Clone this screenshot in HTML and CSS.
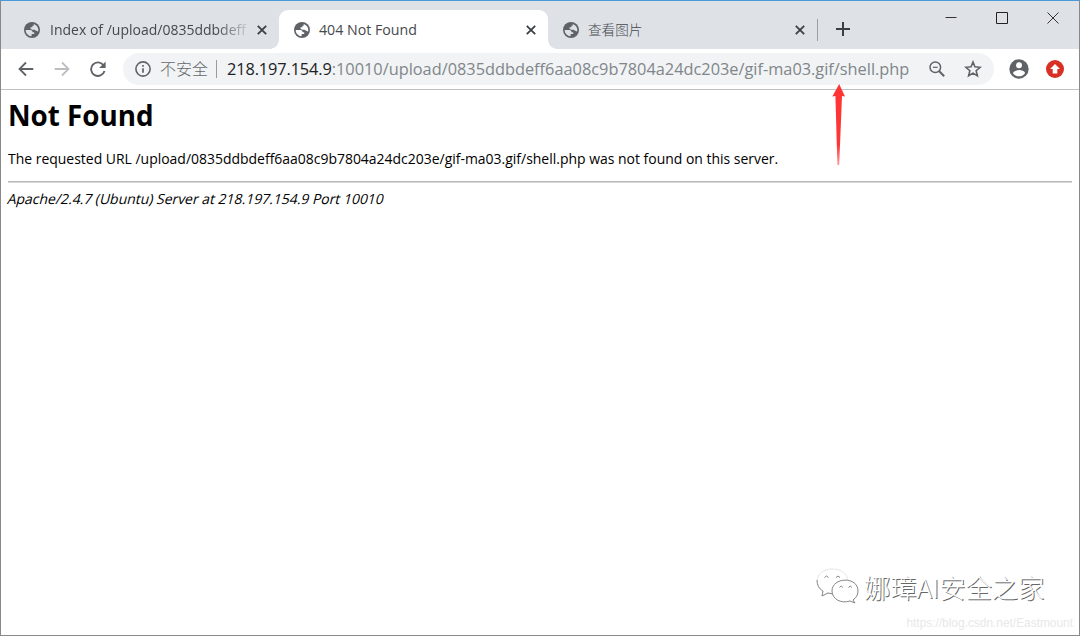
FILE: index.html
```
<!DOCTYPE html>
<html lang="zh-CN">
<head>
<meta charset="utf-8">
<title>404 Not Found</title>
<link rel="stylesheet" href="styles.css">
</head>
<body>
<svg class="defs" width="0" height="0">
  <symbol id="globe" viewBox="0 0 16 16">
    <circle cx="8" cy="8" r="8" fill="#5f6368"/>
    <path d="M1.700 8H6.200C8 8 8.600 9 8.600 10.300H10.200V12H7.600V14.200C4.300 14.100 1.700 11.400 1.700 8Z" fill="currentColor"/>
    <path d="M9.700 1.900C12.400 2.700 14.300 5.100 14.300 8C14.300 8.700 14.200 9.300 14 9.800C13.300 9.100 12.700 8.700 11.600 8.500L10.500 7.700H8L6.500 6.600V5.300H8.400V3.800H9.700Z" fill="currentColor"/>
  </symbol>
  <symbol id="close" viewBox="0 0 10 10"><path d="M.8.8l8.400 8.400M9.200.8L.8 9.200" fill="none" stroke="#3c4043" stroke-width="1.800"/></symbol>
</svg>
<div class="window">
  <header class="tabs">
    <div class="tab first"><svg class="globe"><use href="#globe"/></svg><span class="title faded">Index of /upload/0835ddbdeff</span><svg class="close"><use href="#close"/></svg></div>
    <div class="tab active"><svg class="globe"><use href="#globe"/></svg><span class="title">404 Not Found</span><svg class="close"><use href="#close"/></svg></div>
    <div class="tab"><svg class="globe"><use href="#globe"/></svg><span class="title cjk">查看图片</span><svg class="close"><use href="#close"/></svg></div>
    <span class="divider"></span>
    <svg class="plus" width="14" height="14" viewBox="0 0 14 14"><path d="M7 0v14M0 7h14" stroke="#3c4043" stroke-width="2"/></svg>
    <div class="controls">
      <svg width="12" height="12" viewBox="0 0 12 12"><path d="M.5 5.500h11" stroke="#333"/></svg>
      <svg width="12" height="12" viewBox="0 0 12 12"><path d="M.5.5h11v11H.5z" fill="none" stroke="#222"/></svg>
      <svg width="12" height="12" viewBox="0 0 12 12"><path d="M.5.5l11 11M11.500.5l-11 11" stroke="#333"/></svg>
    </div>
  </header>
  <nav class="toolbar">
    <svg class="nav" viewBox="0 0 16 16"><path d="M15.300 8H2M8 1.500L1.500 8 8 14.500" fill="none" stroke="#5f6368" stroke-width="1.800"/></svg>
    <svg class="nav" viewBox="0 0 16 16"><path d="M.7 8H14M8 1.500L14.500 8 8 14.500" fill="none" stroke="#bcbec1" stroke-width="1.800"/></svg>
    <svg class="nav" viewBox="0 0 16 16"><path d="M13.500 4.200A6.800 6.800 0 1 0 14.500 10" fill="none" stroke="#5f6368" stroke-width="1.900"/><path d="M15.600.5V7H9.100z" fill="#5f6368"/></svg>
    <div class="address">
      <svg class="info" viewBox="0 0 16 16"><circle cx="8" cy="8" r="7.100" fill="none" stroke="#5f6368" stroke-width="1.600"/><path d="M8 7.200v4.600M8 4v1.800" stroke="#5f6368" stroke-width="1.700"/></svg>
      <span class="unsafe">不安全</span>
      <span class="bar"></span>
      <span class="url"><b>218.197.154.9</b>:10010/upload/0835ddbdeff6aa08c9b7804a24dc203e/gif-ma03.gif/shell.php</span>
      <svg class="zoom" viewBox="0 0 16 16"><circle cx="6.300" cy="6.300" r="5.300" fill="none" stroke="#5f6368" stroke-width="1.500"/><path d="M10 10l5.200 5.200" stroke="#5f6368" stroke-width="2"/><path d="M3.900 6.300h4.800" stroke="#5f6368" stroke-width="1.200"/></svg>
      <svg class="star" viewBox="0 0 16 16"><path d="M8 1.800l1.700 4.300 4.600.4-3.500 3 1.100 4.500L8 11.600l-3.900 2.400 1.100-4.500-3.500-3 4.600-.4z" fill="none" stroke="#5f6368" stroke-width="1.400"/></svg>
    </div>
    <svg class="person" viewBox="0 0 20 20"><circle cx="10" cy="10" r="9.700" fill="#5f6368"/><circle cx="10" cy="6.300" r="3" fill="#fff"/><path d="M4 14.200c0-2 4-3.100 6-3.100s6 1.100 6 3.100c-1.300 1.900-3.500 3.100-6 3.100s-4.700-1.200-6-3.100z" fill="#fff"/></svg>
    <svg class="update" viewBox="0 0 18 18"><circle cx="9" cy="9" r="9" fill="#d93025"/><path d="M9 4l5 5h-2.700v4.500H6.700V9H4z" fill="#fff"/></svg>
  </nav>
  <main>
    <h1>Not Found</h1>
    <p>The requested URL /upload/0835ddbdeff6aa08c9b7804a24dc203e/gif-ma03.gif/shell.php was not found on this server.</p>
    <hr>
    <address>Apache/2.4.7 (Ubuntu) Server at 218.197.154.9 Port 10010</address>
  </main>
  <svg class="arrow" width="14" height="82" viewBox="0 0 14 82">
    <defs><linearGradient id="fade" x1="0" y1="0" x2="0" y2="1"><stop offset=".75" stop-color="#ff3535"/><stop offset="1" stop-color="#ff3535" stop-opacity=".5"/></linearGradient></defs>
    <path d="M7.200 0L13 12.500 10 12 7.200 81H5.400L3.400 12 .3 12.500z" fill="url(#fade)"/>
  </svg>
  <div class="watermark">
    <svg width="44" height="38" viewBox="0 0 44 38">
      <g fill="#fff" stroke-width="1">
        <path d="M6 28l1-5C-4 14 2 1 16 1s20 11 12 19-14 5-17 5z" stroke="#e6e6e6"/>
        <path d="M1 12c0 5 2 9 6 11l-1 5 6-3 5 1" fill="none" stroke="#8c8c8c"/>
        <path d="M39 35l-5-2c-9 3-18-2-18-10 0-14 26-15 26 0 0 4-2 7-5 9z" stroke="#858585"/>
        <path d="M8.500 9.500q2-3 4 0M20 9.500q2-3 4 0M23.500 19.500q1.700-3 3.400 0M32.500 19.500q1.700-3 3.400 0" fill="none" stroke="#858585"/>
      </g>
    </svg>
    <span>娜璋AI安全之家</span>
  </div>
  <div class="source">https://blog.csdn.net/Eastmount</div>
</div>
</body>
</html>
```
FILE: styles.css
```
* { box-sizing: border-box; }
body { margin: 0; background: #fff; font-family: "Open Sans", "Noto Sans CJK SC", sans-serif; }
.defs { position: absolute; }
.window { position: relative; width: 1080px; height: 636px; overflow: hidden; border: 1px solid #898989; border-top-color: #4799d9; background: #fff; }
svg { flex: none; display: block; }
.tabs { display: flex; align-items: center; height: 48px; background: #dee1e6; }
.tab { position: relative; display: flex; align-items: center; width: 269px; height: 39px; margin-top: 9px; padding: 0 12px 0 15px; }
.tab.first { width: 278px; padding-left: 23px; }
.tab.active { background: #fff; border-radius: 9px 9px 0 0; }
.tab.active::before, .tab.active::after { content: ""; position: absolute; bottom: 0; width: 9px; height: 9px; }
.tab.active::before { left: -9px; background: radial-gradient(circle at 0 0, transparent 8.5px, #fff 9px); }
.tab.active::after { right: -9px; background: radial-gradient(circle at 100% 0, transparent 8.5px, #fff 9px); }
.globe { width: 16px; height: 16px; color: #dee1e6; }
.active .globe { color: #fff; }
.title { flex: 1; margin-left: 9px; font-size: 14.2px; line-height: 20px; color: #45494d; white-space: nowrap; }
.title.faded { flex: none; width: 198px; margin: 0 9px 0 10px; font-size: 14px; -webkit-mask-image: linear-gradient(90deg, #000 84%, transparent 102%); mask-image: linear-gradient(90deg, #000 84%, transparent 102%); }
.title.cjk { font-size: 13.6px; font-weight: 300; }
.close { width: 10px; height: 10px; }
.divider { width: 1px; height: 22px; margin: 10px 18px 0 0; background: #9b9ea2; }
.plus { margin-top: 8px; }
.controls { display: flex; gap: 39px; margin: -15px 0 0 95px; }
.toolbar { display: flex; align-items: center; height: 41px; padding-left: 16.5px; border-bottom: 1px solid #c0c1c3; }
.nav { width: 16px; height: 16px; margin-right: 20px; }
.address { display: flex; align-items: center; width: 871px; height: 32px; margin-left: -3px; padding-left: 12.5px; border-radius: 16px; background: #f1f3f4; }
.info { width: 16px; height: 16px; }
.unsafe { margin-left: 9px; font-size: 16px; font-weight: 300; line-height: 24px; color: #65696d; white-space: nowrap; }
.bar { width: 1px; height: 18px; margin: 0 10px 0 8px; background: #999c9f; }
.url { width: 702px; font-size: 16.33px; line-height: 24px; color: #80868b; white-space: nowrap; }
.url b { font-weight: 400; letter-spacing: -.12px; color: #202124; }
.zoom { width: 16px; height: 16px; }
.star { width: 18px; height: 18px; margin-left: 19px; }
.person { width: 20px; height: 20px; margin-left: 15px; }
.update { width: 18px; height: 18px; margin-left: 17px; }
main { padding: 5px 7px; color: #000; }
h1 { margin: 0; font-size: 27.8px; line-height: 40px; font-weight: 700; white-space: nowrap; }
p { margin: 14px 0 12px; font-size: 13.96px; line-height: 20px; white-space: nowrap; }
hr { height: 2px; margin: 0; border: 0; border-top: 1px solid #b8b8b8; border-bottom: 1px solid #dadada; }
address { width: max-content; margin-top: 6px; font-size: 13.95px; font-style: normal; line-height: 20px; white-space: nowrap; transform: skewX(-14deg); }
.arrow { position: absolute; left: 831px; top: 83px; }
.watermark { position: absolute; left: 815px; top: 567px; display: flex; align-items: center; color: #fff; font: 300 26.3px "Noto Sans CJK SC", sans-serif; line-height: 38px; text-shadow: 1px 1px 0 #666; white-space: nowrap; }
.watermark span { margin-left: 4px; }
.source { position: absolute; right: 6px; bottom: 4px; font: 11.9px "Liberation Sans", sans-serif; line-height: 16px; color: #e8e8e8; white-space: nowrap; }
```
